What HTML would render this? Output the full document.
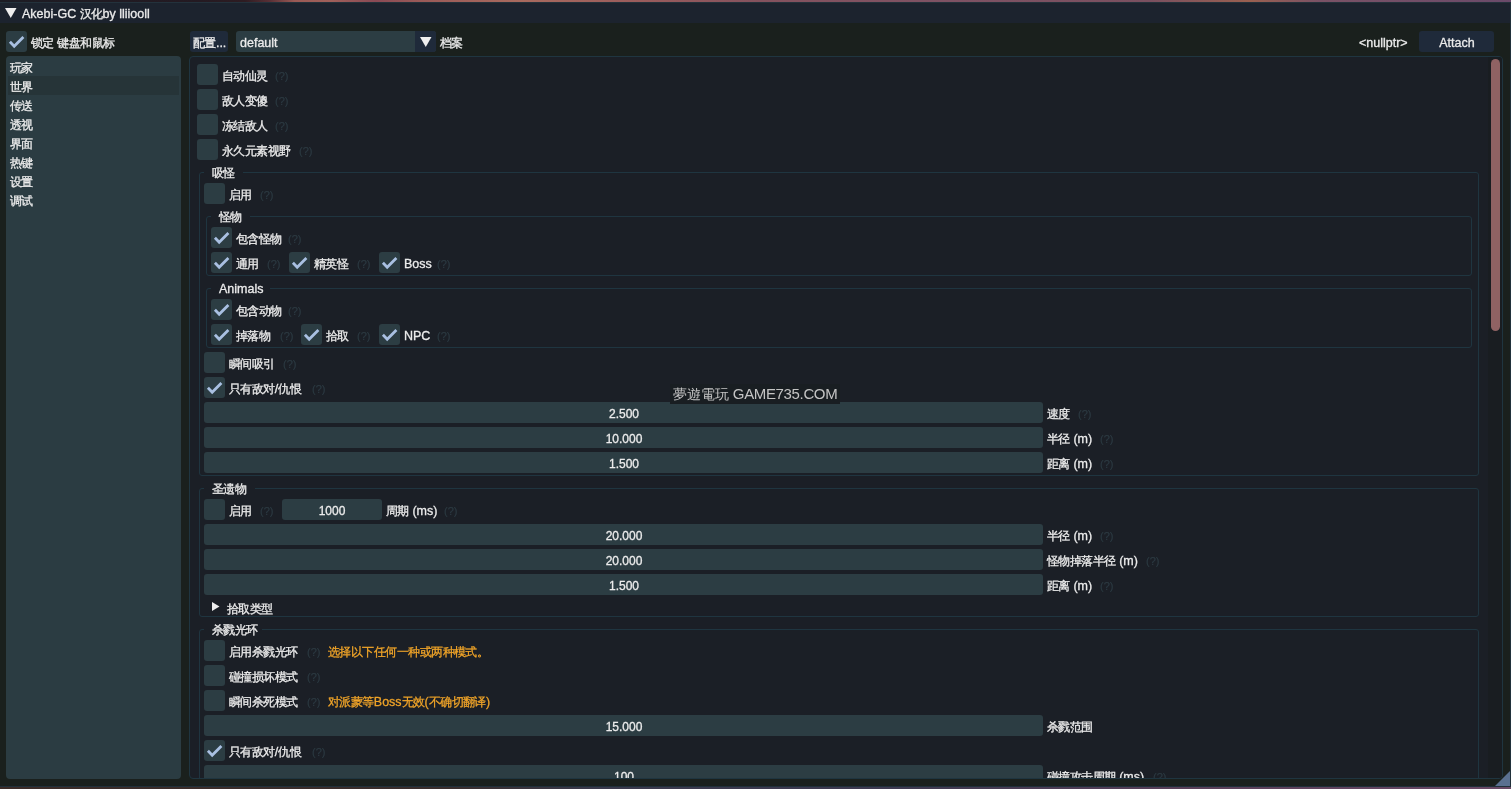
<!DOCTYPE html>
<html><head><meta charset="utf-8"><style>
html,body{margin:0;padding:0;width:1511px;height:789px;overflow:hidden;background:#1a201d;}
body{position:relative;font-family:"Liberation Sans",sans-serif;font-size:12.5px;color:#ececec;}
.t{-webkit-text-stroke:0.3px currentColor;}
.a{position:absolute;box-sizing:content-box;}
.t{white-space:pre;will-change:transform;}
.c{font-size:12px;letter-spacing:-0.55px;font-weight:500;}
.q{color:#2c3a42;font-size:11px;-webkit-text-stroke:0.2px currentColor;}
</style></head><body>
<div class="a" style="left:0;top:0;width:1511px;height:2px;background:linear-gradient(90deg,#1c1c24 0px,#241a22 200px,#2e1c22 245px,#5a3036 270px,#9a5a55 295px,#a0605a 330px,#8a4a55 375px,#9a5a58 420px,#a86a5e 520px,#9a5c5c 640px,#84525e 760px,#7e5264 950px,#7a5060 1150px,#9a6050 1250px,#7a5266 1320px,#6a4a6a 1511px)"></div>
<div class="a" style="left:0px;top:2px;width:1511px;height:1px;background:#23323c;border-radius:0px;"></div>
<div class="a" style="left:0px;top:3px;width:1511px;height:20px;background:#1c232e;border-radius:0px;"></div>
<svg class="a" style="left:5px;top:8px" width="12" height="11" viewBox="0 0 12 11"><polygon points="0,0 11.5,0 5.75,10" fill="#eeeeee"/></svg>
<div class="a t" style="left:22px;top:4px;height:20px;line-height:20px;">Akebi-GC <span class="c">汉化</span>by lliiooll</div>
<div class="a" style="left:0px;top:786px;width:1511px;height:1px;background:#20303a;border-radius:0px;"></div>
<div class="a" style="left:0;top:787px;width:1511px;height:2px;background:linear-gradient(90deg,#3c2c28 0px,#3a2e2c 450px,#3a3a4c 600px,#3e3a50 900px,#5a4058 1200px,#6a4a66 1511px)"></div>
<div class="a" style="left:1510px;top:2px;width:1px;height:785px;background:#20303a;border-radius:0px;"></div>
<svg class="a" style="left:1495px;top:771px" width="15" height="15" viewBox="0 0 15 15"><polygon points="15,0 15,15 0,15" fill="#5a7090"/></svg>
<svg class="a" style="left:6px;top:31px" width="21" height="21" viewBox="0 0 21 21"><rect x="0" y="0" width="21" height="21" rx="3" fill="#2c3d43"/><polyline points="3.9,10.7 8.2,15.2 17.4,5.9" fill="none" stroke="#a9c0e2" stroke-width="2.8"/></svg>
<div class="a t" style="left:31px;top:33px;height:21px;line-height:21px;"><span class="c">锁定</span> <span class="c">键盘和鼠标</span></div>
<div class="a" style="left:190px;top:31px;width:38px;height:21px;background:#1f2a3a;border-radius:3px;"></div>
<div class="a t" style="left:193px;top:33px;height:21px;line-height:21px;"><span class="c">配置</span>...</div>
<div class="a" style="left:236px;top:31px;width:200px;height:21px;background:#2c3d43;border-radius:3px;"></div>
<div class="a" style="left:415px;top:31px;width:21px;height:21px;background:#1f2a3a;border-radius:0 3px 3px 0px;"></div>
<svg class="a" style="left:420px;top:37px" width="12" height="11" viewBox="0 0 12 11"><polygon points="0,0 11.5,0 5.75,10" fill="#eeeeee"/></svg>
<div class="a t" style="left:240px;top:33px;height:21px;line-height:21px;">default</div>
<div class="a t" style="left:440px;top:33px;height:21px;line-height:21px;"><span class="c">档案</span></div>
<div class="a t" style="left:1359px;top:33px;height:21px;line-height:21px;">&lt;nullptr&gt;</div>
<div class="a" style="left:1419px;top:31px;width:75px;height:21px;background:#1f2a3a;border-radius:3px;"></div>
<div class="a t" style="left:1256.5px;width:400px;text-align:center;top:33px;height:21px;line-height:21px;">Attach</div>
<div class="a" style="left:6px;top:56px;width:175px;height:723px;background:#2b3c42;border-radius:4px;"></div>
<div class="a" style="left:8px;top:76px;width:171px;height:19px;background:#263438;border-radius:0px;"></div>
<div class="a t" style="left:10px;top:59px;height:19px;line-height:19px;"><span class="c">玩家</span></div>
<div class="a t" style="left:10px;top:78px;height:19px;line-height:19px;"><span class="c">世界</span></div>
<div class="a t" style="left:10px;top:97px;height:19px;line-height:19px;"><span class="c">传送</span></div>
<div class="a t" style="left:10px;top:116px;height:19px;line-height:19px;"><span class="c">透视</span></div>
<div class="a t" style="left:10px;top:135px;height:19px;line-height:19px;"><span class="c">界面</span></div>
<div class="a t" style="left:10px;top:154px;height:19px;line-height:19px;"><span class="c">热键</span></div>
<div class="a t" style="left:10px;top:173px;height:19px;line-height:19px;"><span class="c">设置</span></div>
<div class="a t" style="left:10px;top:192px;height:19px;line-height:19px;"><span class="c">调试</span></div>
<div class="a" style="left:189px;top:56px;width:1312px;height:721px;border:1px solid #1f3540;border-radius:4px;background:#1b1f26;overflow:hidden">
<div class="a" style="left:1298px;top:0;width:14px;height:721px;background:#191d21"></div>
<div class="a" style="left:1301px;top:2px;width:9px;height:272px;border-radius:5px;background:#8f6263"></div>
<div class="a" style="left:-190px;top:-57px;width:1511px;height:789px">
<svg class="a" style="left:197px;top:64px" width="21" height="21" viewBox="0 0 21 21"><rect x="0" y="0" width="21" height="21" rx="3" fill="#2c3d43"/></svg>
<div class="a t" style="left:222px;top:66px;height:21px;line-height:21px;"><span class="c">自动仙灵</span></div>
<div class="a t q" style="left:275px;top:66px;height:21px;line-height:21px;">(?)</div>
<svg class="a" style="left:197px;top:89px" width="21" height="21" viewBox="0 0 21 21"><rect x="0" y="0" width="21" height="21" rx="3" fill="#2c3d43"/></svg>
<div class="a t" style="left:222px;top:91px;height:21px;line-height:21px;"><span class="c">敌人变傻</span></div>
<div class="a t q" style="left:275px;top:91px;height:21px;line-height:21px;">(?)</div>
<svg class="a" style="left:197px;top:114px" width="21" height="21" viewBox="0 0 21 21"><rect x="0" y="0" width="21" height="21" rx="3" fill="#2c3d43"/></svg>
<div class="a t" style="left:222px;top:116px;height:21px;line-height:21px;"><span class="c">冻结敌人</span></div>
<div class="a t q" style="left:275px;top:116px;height:21px;line-height:21px;">(?)</div>
<svg class="a" style="left:197px;top:139px" width="21" height="21" viewBox="0 0 21 21"><rect x="0" y="0" width="21" height="21" rx="3" fill="#2c3d43"/></svg>
<div class="a t" style="left:222px;top:141px;height:21px;line-height:21px;"><span class="c">永久元素视野</span></div>
<div class="a t q" style="left:299px;top:141px;height:21px;line-height:21px;">(?)</div>
<div class="a" style="left:199px;top:172px;width:1278px;height:302px;border:1px solid #1f3540;border-radius:3px"></div>
<div class="a" style="left:204px;top:172px;width:39px;height:1px;background:#1b1f26"></div>
<div class="a t" style="left:212px;top:163px;height:21px;line-height:21px;"><span class="c">吸怪</span></div>
<svg class="a" style="left:204px;top:183px" width="21" height="21" viewBox="0 0 21 21"><rect x="0" y="0" width="21" height="21" rx="3" fill="#2c3d43"/></svg>
<div class="a t" style="left:229px;top:185px;height:21px;line-height:21px;"><span class="c">启用</span></div>
<div class="a t q" style="left:260px;top:185px;height:21px;line-height:21px;">(?)</div>
<div class="a" style="left:206px;top:216px;width:1264px;height:58px;border:1px solid #1f3540;border-radius:3px"></div>
<div class="a" style="left:211px;top:216px;width:39px;height:1px;background:#1b1f26"></div>
<div class="a t" style="left:219px;top:207px;height:21px;line-height:21px;"><span class="c">怪物</span></div>
<svg class="a" style="left:211px;top:227px" width="21" height="21" viewBox="0 0 21 21"><rect x="0" y="0" width="21" height="21" rx="3" fill="#2c3d43"/><polyline points="3.9,10.7 8.2,15.2 17.4,5.9" fill="none" stroke="#a9c0e2" stroke-width="2.8"/></svg>
<div class="a t" style="left:236px;top:229px;height:21px;line-height:21px;"><span class="c">包含怪物</span></div>
<div class="a t q" style="left:288px;top:229px;height:21px;line-height:21px;">(?)</div>
<svg class="a" style="left:211px;top:252px" width="21" height="21" viewBox="0 0 21 21"><rect x="0" y="0" width="21" height="21" rx="3" fill="#2c3d43"/><polyline points="3.9,10.7 8.2,15.2 17.4,5.9" fill="none" stroke="#a9c0e2" stroke-width="2.8"/></svg>
<div class="a t" style="left:236px;top:254px;height:21px;line-height:21px;"><span class="c">通用</span></div>
<div class="a t q" style="left:267px;top:254px;height:21px;line-height:21px;">(?)</div>
<svg class="a" style="left:289px;top:252px" width="21" height="21" viewBox="0 0 21 21"><rect x="0" y="0" width="21" height="21" rx="3" fill="#2c3d43"/><polyline points="3.9,10.7 8.2,15.2 17.4,5.9" fill="none" stroke="#a9c0e2" stroke-width="2.8"/></svg>
<div class="a t" style="left:314px;top:254px;height:21px;line-height:21px;"><span class="c">精英怪</span></div>
<div class="a t q" style="left:357px;top:254px;height:21px;line-height:21px;">(?)</div>
<svg class="a" style="left:379px;top:252px" width="21" height="21" viewBox="0 0 21 21"><rect x="0" y="0" width="21" height="21" rx="3" fill="#2c3d43"/><polyline points="3.9,10.7 8.2,15.2 17.4,5.9" fill="none" stroke="#a9c0e2" stroke-width="2.8"/></svg>
<div class="a t" style="left:404px;top:254px;height:21px;line-height:21px;">Boss</div>
<div class="a t q" style="left:437px;top:254px;height:21px;line-height:21px;">(?)</div>
<div class="a" style="left:206px;top:288px;width:1264px;height:58px;border:1px solid #1f3540;border-radius:3px"></div>
<div class="a" style="left:211px;top:288px;width:59px;height:1px;background:#1b1f26"></div>
<div class="a t" style="left:219px;top:279px;height:21px;line-height:21px;">Animals</div>
<svg class="a" style="left:211px;top:299px" width="21" height="21" viewBox="0 0 21 21"><rect x="0" y="0" width="21" height="21" rx="3" fill="#2c3d43"/><polyline points="3.9,10.7 8.2,15.2 17.4,5.9" fill="none" stroke="#a9c0e2" stroke-width="2.8"/></svg>
<div class="a t" style="left:236px;top:301px;height:21px;line-height:21px;"><span class="c">包含动物</span></div>
<div class="a t q" style="left:288px;top:301px;height:21px;line-height:21px;">(?)</div>
<svg class="a" style="left:211px;top:324px" width="21" height="21" viewBox="0 0 21 21"><rect x="0" y="0" width="21" height="21" rx="3" fill="#2c3d43"/><polyline points="3.9,10.7 8.2,15.2 17.4,5.9" fill="none" stroke="#a9c0e2" stroke-width="2.8"/></svg>
<div class="a t" style="left:236px;top:326px;height:21px;line-height:21px;"><span class="c">掉落物</span></div>
<div class="a t q" style="left:280px;top:326px;height:21px;line-height:21px;">(?)</div>
<svg class="a" style="left:301px;top:324px" width="21" height="21" viewBox="0 0 21 21"><rect x="0" y="0" width="21" height="21" rx="3" fill="#2c3d43"/><polyline points="3.9,10.7 8.2,15.2 17.4,5.9" fill="none" stroke="#a9c0e2" stroke-width="2.8"/></svg>
<div class="a t" style="left:326px;top:326px;height:21px;line-height:21px;"><span class="c">拾取</span></div>
<div class="a t q" style="left:357px;top:326px;height:21px;line-height:21px;">(?)</div>
<svg class="a" style="left:379px;top:324px" width="21" height="21" viewBox="0 0 21 21"><rect x="0" y="0" width="21" height="21" rx="3" fill="#2c3d43"/><polyline points="3.9,10.7 8.2,15.2 17.4,5.9" fill="none" stroke="#a9c0e2" stroke-width="2.8"/></svg>
<div class="a t" style="left:404px;top:326px;height:21px;line-height:21px;">NPC</div>
<div class="a t q" style="left:437px;top:326px;height:21px;line-height:21px;">(?)</div>
<svg class="a" style="left:204px;top:352px" width="21" height="21" viewBox="0 0 21 21"><rect x="0" y="0" width="21" height="21" rx="3" fill="#2c3d43"/></svg>
<div class="a t" style="left:229px;top:354px;height:21px;line-height:21px;"><span class="c">瞬间吸引</span></div>
<div class="a t q" style="left:283px;top:354px;height:21px;line-height:21px;">(?)</div>
<svg class="a" style="left:204px;top:377px" width="21" height="21" viewBox="0 0 21 21"><rect x="0" y="0" width="21" height="21" rx="3" fill="#2c3d43"/><polyline points="3.9,10.7 8.2,15.2 17.4,5.9" fill="none" stroke="#a9c0e2" stroke-width="2.8"/></svg>
<div class="a t" style="left:229px;top:379px;height:21px;line-height:21px;"><span class="c">只有敌对</span>/<span class="c">仇恨</span></div>
<div class="a t q" style="left:312px;top:379px;height:21px;line-height:21px;">(?)</div>
<div class="a" style="left:204px;top:402px;width:839px;height:21px;background:#2c3d43;border-radius:3px;"></div>
<div class="a t" style="left:423.5px;width:400px;text-align:center;top:404px;height:21px;line-height:21px;font-size:12px;">2.500</div>
<div class="a t" style="left:1047px;top:404px;height:21px;line-height:21px;"><span class="c">速度</span></div>
<div class="a t q" style="left:1078px;top:404px;height:21px;line-height:21px;">(?)</div>
<div class="a" style="left:204px;top:427px;width:839px;height:21px;background:#2c3d43;border-radius:3px;"></div>
<div class="a t" style="left:423.5px;width:400px;text-align:center;top:429px;height:21px;line-height:21px;font-size:12px;">10.000</div>
<div class="a t" style="left:1047px;top:429px;height:21px;line-height:21px;"><span class="c">半径</span> (m)</div>
<div class="a t q" style="left:1100px;top:429px;height:21px;line-height:21px;">(?)</div>
<div class="a" style="left:204px;top:452px;width:839px;height:21px;background:#2c3d43;border-radius:3px;"></div>
<div class="a t" style="left:423.5px;width:400px;text-align:center;top:454px;height:21px;line-height:21px;font-size:12px;">1.500</div>
<div class="a t" style="left:1047px;top:454px;height:21px;line-height:21px;"><span class="c">距离</span> (m)</div>
<div class="a t q" style="left:1100px;top:454px;height:21px;line-height:21px;">(?)</div>
<div class="a" style="left:199px;top:488px;width:1278px;height:127px;border:1px solid #1f3540;border-radius:3px"></div>
<div class="a" style="left:204px;top:488px;width:51px;height:1px;background:#1b1f26"></div>
<div class="a t" style="left:212px;top:479px;height:21px;line-height:21px;"><span class="c">圣遗物</span></div>
<svg class="a" style="left:204px;top:499px" width="21" height="21" viewBox="0 0 21 21"><rect x="0" y="0" width="21" height="21" rx="3" fill="#2c3d43"/></svg>
<div class="a t" style="left:229px;top:501px;height:21px;line-height:21px;"><span class="c">启用</span></div>
<div class="a t q" style="left:260px;top:501px;height:21px;line-height:21px;">(?)</div>
<div class="a" style="left:282px;top:499px;width:100px;height:21px;background:#2c3d43;border-radius:3px;"></div>
<div class="a t" style="left:131.5px;width:400px;text-align:center;top:501px;height:21px;line-height:21px;font-size:12px;">1000</div>
<div class="a t" style="left:386px;top:501px;height:21px;line-height:21px;"><span class="c">周期</span> (ms)</div>
<div class="a t q" style="left:444px;top:501px;height:21px;line-height:21px;">(?)</div>
<div class="a" style="left:204px;top:524px;width:839px;height:21px;background:#2c3d43;border-radius:3px;"></div>
<div class="a t" style="left:423.5px;width:400px;text-align:center;top:526px;height:21px;line-height:21px;font-size:12px;">20.000</div>
<div class="a t" style="left:1047px;top:526px;height:21px;line-height:21px;"><span class="c">半径</span> (m)</div>
<div class="a t q" style="left:1100px;top:526px;height:21px;line-height:21px;">(?)</div>
<div class="a" style="left:204px;top:549px;width:839px;height:21px;background:#2c3d43;border-radius:3px;"></div>
<div class="a t" style="left:423.5px;width:400px;text-align:center;top:551px;height:21px;line-height:21px;font-size:12px;">20.000</div>
<div class="a t" style="left:1047px;top:551px;height:21px;line-height:21px;"><span class="c">怪物掉落半径</span> (m)</div>
<div class="a t q" style="left:1146px;top:551px;height:21px;line-height:21px;">(?)</div>
<div class="a" style="left:204px;top:574px;width:839px;height:21px;background:#2c3d43;border-radius:3px;"></div>
<div class="a t" style="left:423.5px;width:400px;text-align:center;top:576px;height:21px;line-height:21px;font-size:12px;">1.500</div>
<div class="a t" style="left:1047px;top:576px;height:21px;line-height:21px;"><span class="c">距离</span> (m)</div>
<div class="a t q" style="left:1100px;top:576px;height:21px;line-height:21px;">(?)</div>
<svg class="a" style="left:212px;top:602px" width="8" height="9" viewBox="0 0 8 9"><polygon points="0,0 7.5,4.5 0,9" fill="#eeeeee"/></svg>
<div class="a t" style="left:227px;top:599px;height:21px;line-height:21px;"><span class="c">拾取类型</span></div>
<div class="a" style="left:199px;top:629px;width:1278px;height:198px;border:1px solid #1f3540;border-radius:3px"></div>
<div class="a" style="left:204px;top:629px;width:58px;height:1px;background:#1b1f26"></div>
<div class="a t" style="left:212px;top:620px;height:21px;line-height:21px;"><span class="c">杀戮光环</span></div>
<svg class="a" style="left:204px;top:640px" width="21" height="21" viewBox="0 0 21 21"><rect x="0" y="0" width="21" height="21" rx="3" fill="#2c3d43"/></svg>
<div class="a t" style="left:229px;top:642px;height:21px;line-height:21px;"><span class="c">启用杀戮光环</span></div>
<div class="a t q" style="left:307px;top:642px;height:21px;line-height:21px;">(?)</div>
<div class="a t" style="left:328px;top:642px;height:21px;line-height:21px;color:#f0a428;"><span class="c">选择以下任何一种或两种模式。</span></div>
<svg class="a" style="left:204px;top:665px" width="21" height="21" viewBox="0 0 21 21"><rect x="0" y="0" width="21" height="21" rx="3" fill="#2c3d43"/></svg>
<div class="a t" style="left:229px;top:667px;height:21px;line-height:21px;"><span class="c">碰撞损坏模式</span></div>
<div class="a t q" style="left:307px;top:667px;height:21px;line-height:21px;">(?)</div>
<svg class="a" style="left:204px;top:690px" width="21" height="21" viewBox="0 0 21 21"><rect x="0" y="0" width="21" height="21" rx="3" fill="#2c3d43"/></svg>
<div class="a t" style="left:229px;top:692px;height:21px;line-height:21px;"><span class="c">瞬间杀死模式</span></div>
<div class="a t q" style="left:307px;top:692px;height:21px;line-height:21px;">(?)</div>
<div class="a t" style="left:328px;top:692px;height:21px;line-height:21px;color:#f0a428;"><span class="c">对派蒙等</span>Boss<span class="c">无效</span>(<span class="c">不确切翻译</span>)</div>
<div class="a" style="left:204px;top:715px;width:839px;height:21px;background:#2c3d43;border-radius:3px;"></div>
<div class="a t" style="left:423.5px;width:400px;text-align:center;top:717px;height:21px;line-height:21px;font-size:12px;">15.000</div>
<div class="a t" style="left:1047px;top:717px;height:21px;line-height:21px;"><span class="c">杀戮范围</span></div>
<svg class="a" style="left:204px;top:740px" width="21" height="21" viewBox="0 0 21 21"><rect x="0" y="0" width="21" height="21" rx="3" fill="#2c3d43"/><polyline points="3.9,10.7 8.2,15.2 17.4,5.9" fill="none" stroke="#a9c0e2" stroke-width="2.8"/></svg>
<div class="a t" style="left:229px;top:742px;height:21px;line-height:21px;"><span class="c">只有敌对</span>/<span class="c">仇恨</span></div>
<div class="a t q" style="left:312px;top:742px;height:21px;line-height:21px;">(?)</div>
<div class="a" style="left:204px;top:765px;width:839px;height:21px;background:#2c3d43;border-radius:3px;"></div>
<div class="a t" style="left:423.5px;width:400px;text-align:center;top:767px;height:21px;line-height:21px;font-size:12px;">100</div>
<div class="a t" style="left:1047px;top:767px;height:21px;line-height:21px;"><span class="c">碰撞攻击周期</span> (ms)</div>
<div class="a t q" style="left:1153px;top:767px;height:21px;line-height:21px;">(?)</div>
</div></div>
<div class="a" style="left:670px;top:384px;width:170px;height:20px;background:#191e22;border-radius:0px;"></div>
<div class="a t" style="left:673px;top:384px;height:20px;line-height:20px;color:#c4c4c4;font-size:15px;letter-spacing:-0.35px;-webkit-text-stroke:0"><span class="c" style="font-size:14px;letter-spacing:0;font-weight:400">夢遊電玩</span> GAME735.COM</div>
</body></html>
